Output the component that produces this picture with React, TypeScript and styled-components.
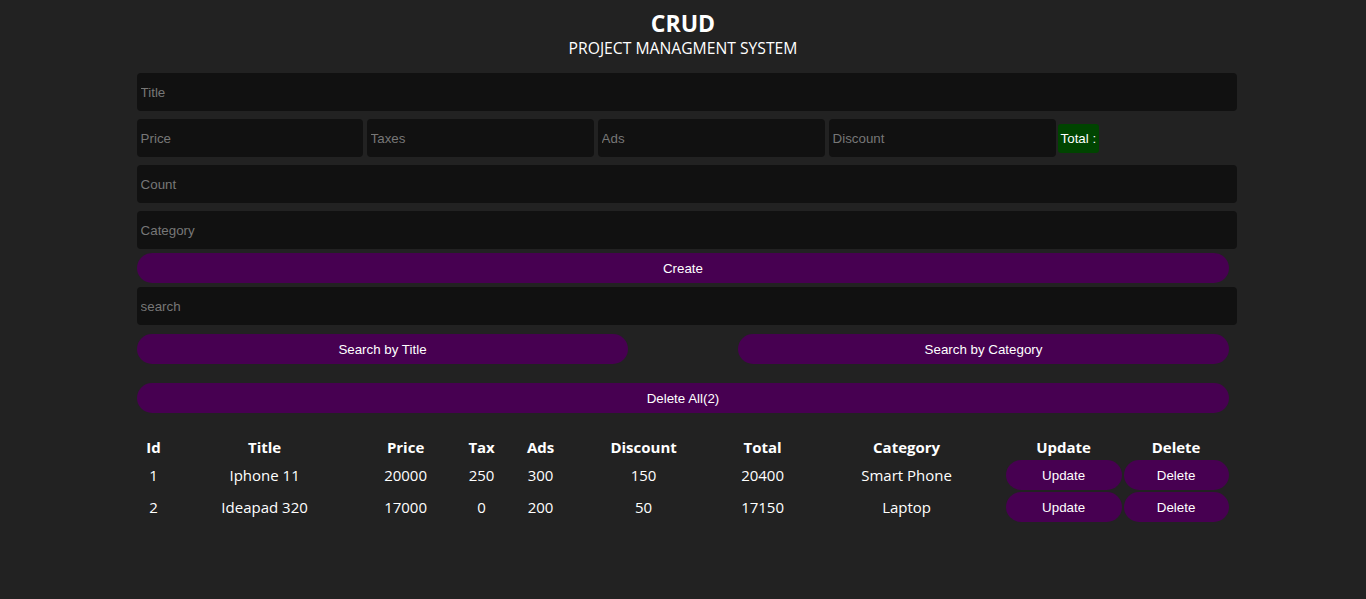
import React from "react";
import styled, { createGlobalStyle } from "styled-components";

const Global = createGlobalStyle`
  * { box-sizing: border-box; }
  body {
    margin: 0;
    background: #222222;
    color: #ffffff;
    font-family: "Open Sans", "Noto Sans", sans-serif;
  }
`;

const Page = styled.div`
  width: 80%;
  margin: 0 auto;
  display: flex;
  flex-direction: column;
`;

const Head = styled.header`
  display: flex;
  flex-direction: column;
  align-items: center;
  padding-top: 9px;
  margin-bottom: 14px;
`;

const Title = styled.h1`
  margin: 0;
  font-size: 23px;
  font-weight: 700;
  line-height: 28px;
`;

const Sub = styled.p`
  margin: 0;
  font-size: 15.7px;
  line-height: 22px;
`;

const Field = styled.input<{ $w?: string }>`
  width: ${(p) => p.$w ?? "calc(100% + 8px)"};
  height: 38px;
  padding: 0 4px;
  background: #111111;
  border: none;
  border-radius: 4px;
  outline: none;
  color: #ffffff;
  font-family: "Liberation Sans", Arial, sans-serif;
  font-size: 13.33px;
  margin: 0;
  &::placeholder { color: #777777; }
`;

const PriceRow = styled.div`
  display: flex;
  align-items: center;
  gap: 4px;
  margin: 8px 0;
`;

const Total = styled.span`
  background: #004400;
  color: #ffffff;
  padding: 7px 3px;
  border-radius: 3px;
  font-family: "Liberation Sans", Arial, sans-serif;
  font-size: 13.33px;
  margin-left: -2px;
`;

const Pill = styled.button<{ $w?: string }>`
  width: ${(p) => p.$w ?? "100%"};
  height: 30px;
  border: none;
  border-radius: 15px;
  background: #470051;
  color: #ffffff;
  font-family: "Liberation Sans", Arial, sans-serif;
  font-size: 13.33px;
  cursor: pointer;
  padding: 0;
`;

const SearchRow = styled.div`
  display: flex;
  justify-content: space-between;
  margin-top: 9px;
`;

const Table = styled.table`
  width: 100%;
  margin-top: 20px;
  border-collapse: collapse;
  text-align: center;
  table-layout: fixed;
`;

const Th = styled.th<{ $w: number }>`
  width: ${(p) => p.$w}px;
  font-size: 15px;
  font-weight: 700;
  padding: 2px 0 0;
  height: 26px;
`;

const Td = styled.td`
  font-size: 15px;
  height: 32px;
  padding: 1px 1px;
`;

const cols: [string, number][] = [
  ["Id", 34],
  ["Title", 188],
  ["Price", 94],
  ["Tax", 58],
  ["Ads", 60],
  ["Discount", 146],
  ["Total", 92],
  ["Category", 196],
  ["Update", 118],
  ["Delete", 107],
];

const rows = [
  { id: 1, title: "Iphone 11", price: 20000, tax: 250, ads: 300, discount: 150, total: 20400, category: "Smart Phone" },
  { id: 2, title: "Ideapad 320", price: 17000, tax: 0, ads: 200, discount: 50, total: 17150, category: "Laptop" },
];

export default function App() {
  return (
    <>
      <Global />
      <Page>
        <Head>
          <Title>CRUD</Title>
          <Sub>PROJECT MANAGMENT SYSTEM</Sub>
        </Head>
        <Field placeholder="Title" />
        <PriceRow>
          <Field $w="226px" placeholder="Price" />
          <Field $w="227px" placeholder="Taxes" />
          <Field $w="227px" placeholder="Ads" />
          <Field $w="227px" placeholder="Discount" />
          <Total>Total :</Total>
        </PriceRow>
        <Field placeholder="Count" />
        <Field placeholder="Category" style={{ marginTop: 8 }} />
        <Pill style={{ marginTop: 4 }}>Create</Pill>
        <Field placeholder="search" style={{ marginTop: 4 }} />
        <SearchRow>
          <Pill $w="45%">Search by Title</Pill>
          <Pill $w="45%">Search by Category</Pill>
        </SearchRow>
        <Pill style={{ marginTop: 19 }}>Delete All(2)</Pill>
        <Table>
          <thead>
            <tr>
              {cols.map(([c, w]) => (
                <Th key={c} $w={w}>{c}</Th>
              ))}
            </tr>
          </thead>
          <tbody>
            {rows.map((r) => (
              <tr key={r.id}>
                <Td>{r.id}</Td>
                <Td>{r.title}</Td>
                <Td>{r.price}</Td>
                <Td>{r.tax}</Td>
                <Td>{r.ads}</Td>
                <Td>{r.discount}</Td>
                <Td>{r.total}</Td>
                <Td>{r.category}</Td>
                <Td><Pill>Update</Pill></Td>
                <Td><Pill>Delete</Pill></Td>
              </tr>
            ))}
          </tbody>
        </Table>
      </Page>
    </>
  );
}
